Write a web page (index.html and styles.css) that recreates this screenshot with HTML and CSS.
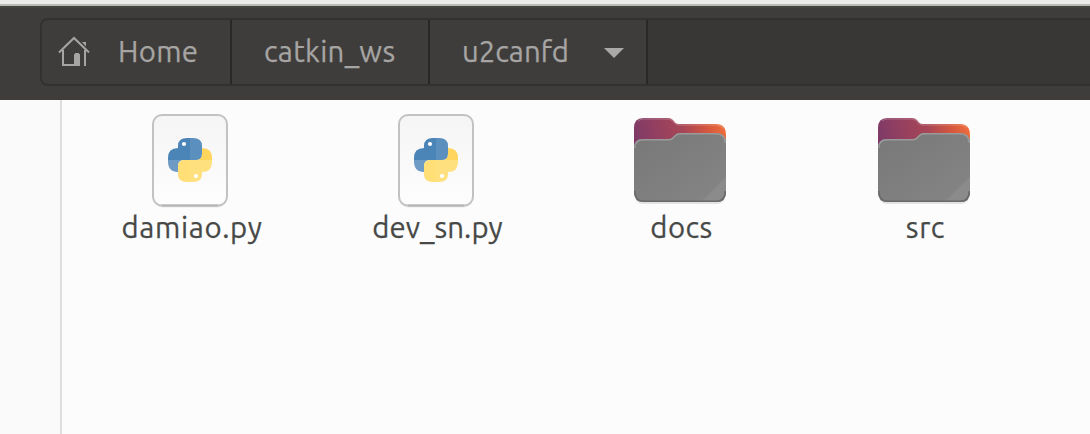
FILE: index.html
```html
<!DOCTYPE html>
<html lang="en">
<head>
<meta charset="utf-8">
<title>u2canfd</title>
<link rel="stylesheet" href="styles.css">
</head>
<body>
<svg class="defs" aria-hidden="true">
  <defs>
    <linearGradient id="paper" x1="0" y1="0" x2="0" y2="1"><stop offset="0" stop-color="#f5f5f5"/><stop offset="1" stop-color="#fdfdfd"/></linearGradient>
    <linearGradient id="back" gradientUnits="userSpaceOnUse" x1="9" y1="40" x2="101" y2="20"><stop offset="0" stop-color="#7c3a68"/><stop offset="0.3" stop-color="#96405f"/><stop offset="0.55" stop-color="#a84657"/><stop offset="0.8" stop-color="#d5583f"/><stop offset="1" stop-color="#f0703c"/></linearGradient>
    <linearGradient id="front" x1="0" y1="0" x2="1" y2="1"><stop offset="0" stop-color="#787878"/><stop offset="1" stop-color="#858585"/></linearGradient>
    <clipPath id="front-clip"><path d="M9 43Q9 34 18 34H44Q46.500 34 48 32L50 30Q52 28 55 28H91Q101 28 101 38V87Q101 97 91 97H19Q9 97 9 87Z"/></clipPath>
    <clipPath id="blue-clip"><path d="M38 67Q28 67 28 56V53Q28 43 38 43V41Q38 33 47 33H53Q62 33 62 41V49Q62 55 56 55H44Q38 55 38 61Z"/></clipPath>
    <clipPath id="yellow-clip"><path d="M62 43Q72 43 72 53V57Q72 67 62 67V69Q62 77 53 77H47Q38 77 38 69V61Q38 55 44 55H56Q62 55 62 49Z"/></clipPath>
    <symbol id="python-file" viewBox="0 0 100 110">
      <rect x="12.500" y="10.500" width="75" height="92" rx="10" fill="#e9e9e9"/>
      <rect x="13" y="10" width="74" height="90.500" rx="9" fill="url(#paper)" stroke="#c2c2c2" stroke-width="2"/>
      <path d="M22 100.500H78" stroke="#b5b5b5" stroke-width="2"/>
      <g clip-path="url(#blue-clip)">
        <path d="M28 33H50V55H28Z" fill="#4b84b7"/>
        <path d="M50 33H62V55H50Z" fill="#5b8fbe"/>
        <path d="M28 55H50V67H28Z" fill="#6d9bc5"/>
      </g>
      <g clip-path="url(#yellow-clip)">
        <path d="M38 55H50V77H38Z" fill="#ffdf76"/>
        <path d="M50 55H72V77H50Z" fill="#ffe07f"/>
        <path d="M62 43H72V55H50V50Z" fill="#ffd55d"/>
      </g>
      <circle cx="44" cy="39" r="2.100" fill="#fff"/><circle cx="56" cy="71" r="2.100" fill="#fff"/>
    </symbol>
    <symbol id="folder" viewBox="0 0 110 110">
      <rect x="10" y="86" width="90" height="13" rx="8" fill="#e2e2e2"/>
      <path d="M9 23Q9 13 18 13H43Q46 13 48 15L50 17.500Q51.500 19 54 19H91Q101 19 101 30V55H9Z" fill="url(#back)"/>
      <path d="M13 16Q15 14 18 14H43Q46 14 48 16L50 18.500Q52 20 54 20H91Q96 20 98 23" fill="none" stroke="#fff" stroke-opacity=".18" stroke-width="1.500"/>
      <g clip-path="url(#front-clip)">
        <path d="M9 28H101V97H9Z" fill="url(#front)"/>
        <path d="M101 72V97H76Z" fill="#8b8b8b"/>
        <path d="M9 43Q9 34 18 34H44Q46.500 34 48 32L50 30Q52 28 55 28H91Q101 28 101 38" fill="none" stroke="#9a9a9a" stroke-width="3"/>
        <path d="M9 86Q9 97 19 97H91Q101 97 101 86" fill="none" stroke="#696969" stroke-width="3"/>
      </g>
    </symbol>
  </defs>
</svg>
<div class="window">
  <div class="strip"></div>
  <header class="toolbar">
    <nav class="pathbar">
      <div class="crumb crumb-home">
        <svg class="home" viewBox="0 0 32 32" width="32" height="32">
          <path d="M1 16.500L16 2L31 16.500M5 14V29H21M27 14V30" fill="none" stroke="#a6a5a3" stroke-width="2"/>
          <path d="M16 30V18.500L17.500 17H20.500L22 18.500V30ZM24 6H28V10.500Z" fill="#a6a5a3"/>
        </svg>
        <span class="t-home">Home</span>
      </div>
      <div class="crumb crumb-parent"><span class="t-catkin">catkin_ws</span></div>
      <div class="crumb crumb-current"><span class="t-canfd">u2canfd</span>
        <svg class="arrow" width="20" height="10" viewBox="0 0 20 10"><path d="M0 0H20L10 10Z" fill="#aaa9a7"/></svg>
      </div>
    </nav>
  </header>
  <div class="content">
    <aside class="sidebar"></aside>
    <main class="files">
      <div class="file"><svg width="100" height="110"><use href="#python-file"/></svg><span class="label t-damiao">damiao.py</span></div>
      <div class="file"><svg width="100" height="110"><use href="#python-file"/></svg><span class="label t-dev">dev_sn.py</span></div>
      <div class="file"><svg width="110" height="110"><use href="#folder"/></svg><span class="label t-docs">docs</span></div>
      <div class="file"><svg width="110" height="110"><use href="#folder"/></svg><span class="label t-src">src</span></div>
    </main>
  </div>
</div>
</body>
</html>
```

FILE: styles.css
```css
* { box-sizing: border-box; }
body { margin: 0; overflow: hidden; font-family: Ubuntu, "Noto Sans", sans-serif; font-size: 29.33px; line-height: 40px; -webkit-text-stroke: 0.25px; }
svg { display: block; flex: none; }
.defs { position: absolute; width: 0; height: 0; }
.window { display: flex; flex-direction: column; height: 434px; background: #fcfcfc; }
.strip { height: 6px; background: #ebebea; border-bottom: 2px solid #b9bbb7; flex: none; }
.toolbar { height: 94px; flex: none; padding: 10px 0 14px 40px; background: #3f3d3b; border-top: 2px solid #43443e; }
.pathbar { display: flex; height: 68px; background: #393735; border: 2px solid #33312f; border-right: 0; border-radius: 8px 0 0 8px; overflow: hidden; color: #a6a5a3; }
.crumb { display: flex; align-items: center; border-right: 2px solid #292826; background: #3f3d3b; white-space: nowrap; }
.crumb-home { width: 190px; padding-left: 16px; }
.crumb-parent { width: 198px; padding-left: 32px; }
.crumb-current { width: 218px; padding-left: 32px; }
.crumb span { width: 146px; }
.crumb .t-home { width: auto; margin-left: 28px; }
.crumb .t-canfd { width: 142px; }
.arrow { margin-top: 2px; }
.content { display: flex; flex: 1; }
.sidebar { width: 62px; background: #fafafa; border-right: 2px solid #dedede; }
.files { display: grid; grid-template-columns: 246px 245px 243px 245px; align-content: start; padding: 5px 0 0 5px; }
.file { display: flex; flex-direction: column; align-items: center; color: #474947; }
.label { margin-top: -7px; margin-left: 4px; white-space: nowrap; }
.t-home { letter-spacing: 0.3px; }
.t-catkin { letter-spacing: 0.3px; }
.t-canfd { letter-spacing: 0; }
.t-damiao { letter-spacing: 0.65px; }
.t-dev { letter-spacing: 0.05px; }
.t-docs { letter-spacing: 0.4px; }
.t-src { letter-spacing: 0.6px; }
```
